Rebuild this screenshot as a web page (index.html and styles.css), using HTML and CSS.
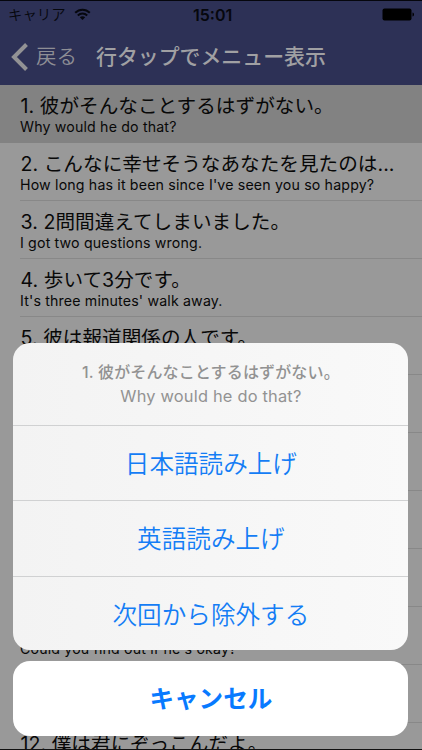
FILE: index.html
```html
<!DOCTYPE html>
<html lang="ja">
<head>
<meta charset="utf-8">
<title>行タップでメニュー表示</title>
<link rel="stylesheet" href="styles.css">
</head>
<body>
<div class="screen">
  <header class="top">
    <div class="status">
      <span class="carrier">キャリア</span>
      <svg class="wifi" width="17" height="13" viewBox="0 0 17 13" fill="none" stroke="#06070d" stroke-width="2"><path d="M1.2 4.8C5.4.7 11.6.7 15.8 4.8"/><path d="M3.8 7.5c2.7-2.6 6.700-2.600 9.400 0"/><path d="M8.500 12 5.800 9.300c1.500-1.400 3.900-1.400 5.400 0z" fill="#06070d" stroke="none"/></svg>
      <span class="time">15:01</span>
      <svg class="battery" width="33" height="13" viewBox="0 0 33 13" fill="#000"><rect x="0.500" y="0.500" width="29" height="12" rx="2"/><path d="M30.500 4.500c2 .5 2 3.500 0 4z"/></svg>
    </div>
    <nav class="nav">
      <svg class="chevron" width="18" height="28" viewBox="0 0 18 28" fill="none" stroke="#929294" stroke-width="4"><path d="M15.500 1.500 3 14 15.500 26.500"/></svg>
      <span class="back">戻る</span>
      <h1 class="title">行タップでメニュー表示</h1>
    </nav>
  </header>
  <main class="list">
    <div class="row selected"><div class="ja">1. 彼がそんなことするはずがない。</div><div class="en">Why would he do that?</div></div>
    <div class="row"><div class="ja">2. こんなに幸せそうなあなたを見たのは...</div><div class="en">How long has it been since I've seen you so happy?</div></div>
    <div class="row"><div class="ja">3. 2問間違えてしまいました。</div><div class="en">I got two questions wrong.</div></div>
    <div class="row"><div class="ja">4. 歩いて3分です。</div><div class="en">It's three minutes' walk away.</div></div>
    <div class="row"><div class="ja">5. 彼は報道関係の人です。</div></div>
    <div class="row"></div>
    <div class="row"></div>
    <div class="row"></div>
    <div class="row"></div>
    <div class="row"><div class="ja">&nbsp;</div><div class="en">Could you find out if he's okay?</div></div>
    <div class="row"></div>
    <div class="row"><div class="ja">12. 僕は君にぞっこんだよ。</div></div>
  </main>
  <div class="sheet">
    <section class="actions">
      <div class="message"><div class="message-ja">1. 彼がそんなことするはずがない。</div><div class="message-en">Why would he do that?</div></div>
      <div class="action">日本語読み上げ</div>
      <div class="action">英語読み上げ</div>
      <div class="action">次回から除外する</div>
    </section>
    <div class="cancel">キャンセル</div>
  </div>
</div>
</body>
</html>
```
FILE: styles.css
```css
* { box-sizing: border-box; }
body { margin: 0; font-family: Inter, "Noto Sans CJK JP", sans-serif; }
.screen {
  position: relative;
  width: 422px;
  height: 750px;
  overflow: hidden;
  background: #999;
  border-top: 1px solid #05060d;
  border-bottom: 1px solid #111;
}
.top { height: 84px; background: #2d3156; }
.status { height: 27px; display: flex; align-items: center; padding-left: 8px; color: #06070d; }
.carrier { width: 58px; font-size: 14.4px; line-height: 27px; font-weight: 350; }
.wifi { margin-left: 8px; }
.time { margin-left: 102px; width: 44px; font-size: 16px; font-weight: 600; white-space: nowrap; }
.battery { margin-left: 145px; flex: none; }
.nav { height: 57px; display: flex; align-items: center; padding-left: 11px; color: #a0a0a3; }
.chevron { flex: none; }
.back { width: 41px; margin-left: 7px; font-size: 20.5px; font-weight: 350; line-height: 30px; color: #8e8e95; }
.title { margin: 0 0 0 19px; font-size: 20.9px; line-height: 30px; font-weight: 500; white-space: nowrap; }
.row { height: 58px; padding: 8px 0 0 20px; color: #080808; white-space: nowrap; background: linear-gradient(#888, #888) 20px 100% / 402px 1px no-repeat; }
.selected { background: #828282; }
.ja { font-size: 19.6px; line-height: 27px; height: 26px; font-weight: 400; letter-spacing: 0.04px; padding-left: 0.5px; }
.en { font-size: 14.200px; line-height: 16px; letter-spacing: 0.16px; }
.sheet { position: absolute; left: 13.400px; top: 342.400px; width: 395px; }
.actions { height: 307px; border-radius: 17px; overflow: hidden; background: linear-gradient(90deg, #f3f3f3, #f9f9f9); text-align: center; }
.message { height: 81.500px; padding-top: 17px; color: #929292; }
.message-ja { font-size: 16px; line-height: 25px; font-weight: 500; letter-spacing: 0.15px; }
.message-en { font-size: 16.400px; line-height: 22px; letter-spacing: 0.2px; }
.action { height: 75.500px; border-top: 1px solid #d0d1d2; font-size: 24.600px; line-height: 77px; color: #147df5; font-weight: 350; }
.cancel { height: 75px; margin-top: 11px; border-radius: 17px; background: #fff; color: #087aff; text-align: center; font-size: 24.600px; line-height: 77px; font-weight: 700; }
```
